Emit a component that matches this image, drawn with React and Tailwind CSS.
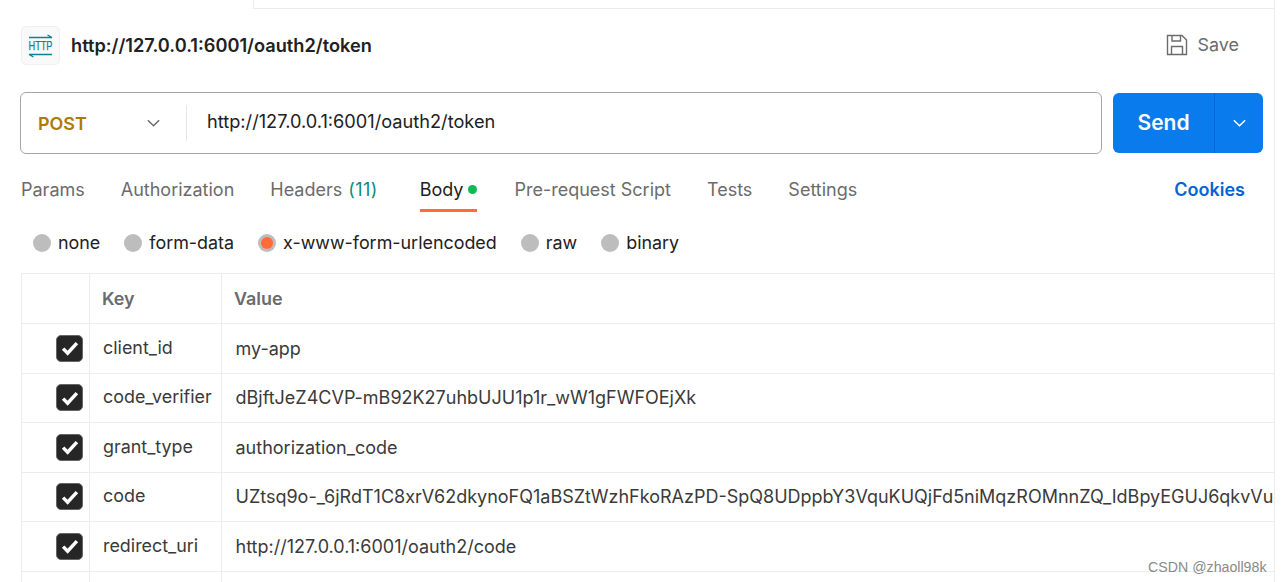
const rows = [
  ["client_id", "my-app"],
  ["code_verifier", "dBjftJeZ4CVP-mB92K27uhbUJU1p1r_wW1gFWFOEjXk"],
  ["grant_type", "authorization_code"],
  ["code", "UZtsq9o-_6jRdT1C8xrV62dkynoFQ1aBSZtWzhFkoRAzPD-SpQ8UDppbY3VquKUQjFd5niMqzROMnnZQ_IdBpyEGUJ6qkvVuMfTq"],
  ["redirect_uri", "http://127.0.0.1:6001/oauth2/code"],
];

function Chevron({ className, color }) {
  return (
    <svg viewBox="0 0 16 10" className={className} fill="none" stroke={color} strokeWidth="1.6">
      <path d="M2 2l6 6 6-6" />
    </svg>
  );
}

function Radio({ label, active }) {
  return (
    <div className="flex items-center gap-[7px]">
      <span className="flex w-[18px] h-[18px] items-center justify-center rounded-full bg-[#bdbdbd]">
        {active && <span className="w-[12px] h-[12px] rounded-full bg-[#ff6c37]" />}
      </span>
      <span className="text-[#212121]">{label}</span>
    </div>
  );
}

function Check() {
  return (
    <span className="flex w-[27px] h-[27px] items-center justify-center rounded-[5px] bg-[#262626] border border-[#666]">
      <svg viewBox="0 0 16 16" className="w-[20px] h-[20px]" fill="none" stroke="#fff" strokeWidth="2.8">
        <path d="M2.5 8.5l3.6 3.6 7.4-8" />
      </svg>
    </span>
  );
}

export default function App() {
  return (
    <div className="relative w-[1282px] h-[582px] overflow-hidden bg-white text-[17.9px] font-['Inter',sans-serif]">
      <div className="w-[1275px] h-[582px] border-r border-[#ededed] overflow-hidden">
        <div className="ml-[253px] h-[9px] border-l border-b border-[#ededed]" />

        <div className="flex items-center justify-between h-[39px] mt-[17px] pl-[21px] pr-[35px]">
          <div className="flex items-center gap-[11px]">
            <span className="flex w-[39px] h-[39px] items-center justify-center rounded-[5px] border border-[#efefef] bg-[#f9f9f9]">
              <svg viewBox="0 0 26 24" className="w-[26px] h-[24px] overflow-visible" fill="none" stroke="#14808c" strokeWidth="1.4">
                <path d="M1 3.5h23M19.5 1L24 3.5" />
                <path d="M1 20.5h23M1 20.5l4.5 2.5" />
                <text x="0.5" y="16" fontSize="13" fill="#14808c" stroke="#14808c" strokeWidth="0.25" fontFamily="'Liberation Sans',sans-serif" textLength="24" lengthAdjust="spacingAndGlyphs">HTTP</text>
              </svg>
            </span>
            <span className="font-semibold text-[#212121] text-[18.2px] leading-[39px]">http://127.0.0.1:6001/oauth2/token</span>
          </div>
          <div className="flex items-center gap-[10px] text-[#6b6b6b] -mt-px">
            <svg viewBox="0 0 22 22" className="w-[22px] h-[22px]" fill="none" stroke="#6b6b6b" strokeWidth="1.4">
              <path d="M1.5 1.5h14.5l4.5 4.5v14.5h-19z" />
              <path d="M6 1.5v5.5h8.5v-5.5M5.5 20.5v-8h11v8" />
            </svg>
            <span>Save</span>
          </div>
        </div>

        <div className="flex mt-[27px] ml-[20px] gap-[11px]">
          <div className="flex items-center w-[1082px] h-[62px] rounded-[6px] border border-[#a6a6a6]">
            <span className="w-[125px] pl-[17px] font-semibold text-[#ad7a03] mt-[3px]">POST</span>
            <Chevron className="w-[15px] h-[10px]" color="#6b6b6b" />
            <span className="ml-[25px] w-px h-[36px] bg-[#e6e6e6]" />
            <span className="ml-[20px] text-[#212121] text-[18.2px] -mt-[2px]">http://127.0.0.1:6001/oauth2/token</span>
          </div>
          <div className="flex items-center w-[150px] h-[60px] mt-px rounded-[6px] bg-[#097bed] text-white">
            <span className="w-[101px] text-center text-[21px] font-semibold">Send</span>
            <span className="w-px h-full bg-[#0265d2]" />
            <span className="flex flex-1 justify-center">
              <Chevron className="w-[15px] h-[10px]" color="#ffffff" />
            </span>
          </div>
        </div>

        <div className="relative flex items-center h-[24px] mt-[23px] pl-[21px] text-[18px] text-[#6b6b6b]">
          <span>Params</span>
          <span className="ml-[36px]">Authorization</span>
          <span className="ml-[36px]">Headers</span>
          <span className="ml-[6px] text-[#0f8a78] tracking-[0.4px]">(11)</span>
          <span className="relative ml-[42px] flex items-center gap-[5px] text-[#212121]">
            Body
            <span className="w-[9px] h-[9px] rounded-full bg-[#0cbb52]" />
            <span className="absolute left-0 right-0 top-[33px] h-[3px] bg-[#ff6c37]" />
          </span>
          <span className="ml-[37px]">Pre-request Script</span>
          <span className="ml-[36px]">Tests</span>
          <span className="ml-[36px]">Settings</span>
          <span className="ml-auto mr-[29px] font-semibold text-[#0265d2]">Cookies</span>
        </div>

        <div className="flex items-center h-[24px] mt-[30px] pl-[33px] gap-[24px]">
          <Radio label="none" />
          <Radio label="form-data" />
          <Radio label="x-www-form-urlencoded" active />
          <Radio label="raw" />
          <Radio label="binary" />
        </div>

        <div className="ml-[21px] mt-[18px] border-l border-t border-[#ededed]">
          <div className="flex h-[50px] border-b border-[#ededed] font-semibold text-[#6b6b6b]">
            <div className="w-[68px] shrink-0 border-r border-[#ededed]" />
            <div className="flex items-center w-[132px] shrink-0 pl-[12px] pt-px border-r border-[#ededed]">Key</div>
            <div className="flex items-center flex-1 pl-[12px] pt-px">Value</div>
          </div>
          {rows.map(([k, v]) => (
            <div key={k} className="flex h-[49.5px] border-b border-[#ededed] text-[#3a3a3a]">
              <div className="flex items-center justify-end w-[68px] shrink-0 pr-[6px] border-r border-[#ededed]">
                <Check />
              </div>
              <div className="flex items-center w-[132px] shrink-0 pl-[13px] border-r border-[#ededed]">{k}</div>
              <div className="flex items-center flex-1 min-w-0 pl-[13.5px] overflow-hidden whitespace-nowrap text-[18px]">{v}</div>
            </div>
          ))}
          <div className="flex h-[20px]">
            <div className="w-[68px] shrink-0 border-r border-[#ededed]" />
            <div className="w-[132px] shrink-0 border-r border-[#ededed]" />
          </div>
        </div>
      </div>
      <span className="absolute left-[1148px] top-[557px] text-[14.2px] text-[#8a8a8a] font-['Liberation_Sans',sans-serif]">CSDN @zhaoll98k</span>
    </div>
  );
}
